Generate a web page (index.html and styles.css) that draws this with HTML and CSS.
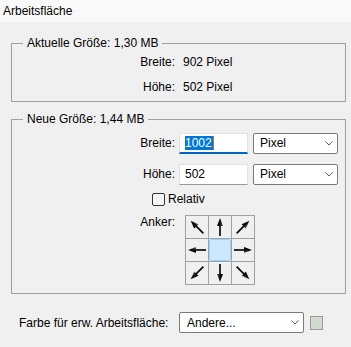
FILE: index.html
```html
<!DOCTYPE html>
<html lang="de">
<head>
<meta charset="utf-8">
<title>Arbeitsfläche</title>
<link rel="stylesheet" href="styles.css">
</head>
<body>
<svg class="defs" width="0" height="0" aria-hidden="true">
  <defs>
    <linearGradient id="headGrad" x1="0" y1="0" x2="1" y2="0">
      <stop offset="0" stop-color="#000"/>
      <stop offset="0.55" stop-color="#111"/>
      <stop offset="1" stop-color="#666"/>
    </linearGradient>
    <symbol id="arrow" viewBox="0 0 22 22">
      <rect x="10.2" y="8" width="1.6" height="12" fill="#000"/>
      <polygon points="11,2 8,10 14,10" fill="url(#headGrad)"/>
    </symbol>
  </defs>
</svg>
<div class="window">
  <div class="titlebar">Arbeitsfläche</div>
  <div class="content">
    <fieldset class="group group-current">
      <legend>Aktuelle Größe: 1,30 MB</legend>
      <div class="info-grid">
        <span class="label">Breite:</span><span class="value">902 Pixel</span>
        <span class="label">Höhe:</span><span class="value">502 Pixel</span>
      </div>
    </fieldset>

    <fieldset class="group group-new">
      <legend>Neue Größe: 1,44 MB</legend>
      <div class="field-row">
        <span class="label">Breite:</span>
        <div class="textbox active"><span class="sel">1002</span><span class="caret"></span></div>
        <div class="select unit"><span>Pixel</span><svg class="chev" viewBox="0 0 8 5"><polyline points="0.5,0.5 4,4 7.5,0.5" fill="none" stroke="#5a5a5a" stroke-width="1"/></svg></div>
      </div>
      <div class="field-row">
        <span class="label">Höhe:</span>
        <div class="textbox"><span>502</span></div>
        <div class="select unit"><span>Pixel</span><svg class="chev" viewBox="0 0 8 5"><polyline points="0.5,0.5 4,4 7.5,0.5" fill="none" stroke="#5a5a5a" stroke-width="1"/></svg></div>
      </div>
      <div class="check-row">
        <span class="checkbox"></span><span>Relativ</span>
      </div>
      <div class="anchor-row">
        <span class="label">Anker:</span>
        <div class="anchor-grid">
          <div class="cell"><svg class="arr r-nw"><use href="#arrow"/></svg></div>
          <div class="cell"><svg class="arr r-n"><use href="#arrow"/></svg></div>
          <div class="cell"><svg class="arr r-ne"><use href="#arrow"/></svg></div>
          <div class="cell"><svg class="arr r-w"><use href="#arrow"/></svg></div>
          <div class="cell"><div class="pin"></div></div>
          <div class="cell"><svg class="arr r-e"><use href="#arrow"/></svg></div>
          <div class="cell"><svg class="arr r-sw"><use href="#arrow"/></svg></div>
          <div class="cell"><svg class="arr r-s"><use href="#arrow"/></svg></div>
          <div class="cell"><svg class="arr r-se"><use href="#arrow"/></svg></div>
        </div>
      </div>
    </fieldset>

    <div class="bottom-row">
      <span class="bottom-label">Farbe für erw. Arbeitsfläche:</span>
      <div class="select wide"><span>Andere...</span><svg class="chev" viewBox="0 0 8 5"><polyline points="0.5,0.5 4,4 7.5,0.5" fill="none" stroke="#5a5a5a" stroke-width="1"/></svg></div>
      <span class="swatch"></span>
    </div>
  </div>
</div>
</body>
</html>
```
FILE: styles.css
```css
* { box-sizing: border-box; }
html, body { margin: 0; padding: 0; }
body {
  width: 351px;
  height: 347px;
  overflow: hidden;
  background: #f0f0f0;
  font-family: "Liberation Sans", Arial, sans-serif;
  font-size: 12px;
  color: #000;
}
.defs { position: absolute; width: 0; height: 0; }
.titlebar {
  height: 22px;
  line-height: 22px;
  padding-left: 3px;
  background: #f9f9f9;
}
.content { padding: 0 5px 0 11px; }
.group {
  margin: 13px 0 0;
  padding: 3px 0 6px;
  border: 1px solid #a0a0a0;
  min-width: 0;
}
.group legend {
  margin-left: 11px;
  padding: 0 4px;
  line-height: 16px;
}
.group-new { margin-top: 9px; padding: 5px 0 8px; }
.info-grid {
  display: grid;
  grid-template-columns: 163px auto;
  column-gap: 8px;
  row-gap: 9px;
  line-height: 16px;
}
.label { text-align: right; }
.field-row { display: flex; align-items: center; height: 22px; }
.field-row + .field-row { margin-top: 9px; }
.field-row .label { width: 163px; margin-right: 4px; }
.textbox {
  width: 69px;
  height: 21px;
  background: #fff;
  border: 1px solid #e2e2e2;
  border-bottom-color: #9a9a9a;
  padding-left: 5px;
  display: flex;
  align-items: center;
  margin-right: 5px;
}
.textbox.active { border-bottom: 2px solid #0067c0; padding-top: 1px; }
.sel { background: #0078d7; color: #fff; line-height: 14px; padding: 0 1px 0 0; }
.caret { width: 1px; height: 14px; background: #c86a2a; }
.select {
  height: 21px;
  background: #fff;
  border: 1px solid #7a7a7a;
  border-radius: 2px;
  display: flex;
  align-items: center;
  justify-content: space-between;
  padding: 0 4px 0 6px;
}
.select.unit { width: 85px; }
.chev { width: 8px; height: 5px; }
.check-row {
  display: flex;
  align-items: center;
  height: 16px;
  margin: 6px 0 0 140px;
}
.checkbox {
  width: 13px;
  height: 13px;
  border: 1px solid #333;
  border-radius: 2px;
  background: #f7f7f7;
  margin-right: 3px;
}
.anchor-row { display: flex; margin-top: 8px; }
.anchor-row .label { width: 163px; margin-right: 10px; line-height: 14px; }
.anchor-grid {
  display: grid;
  grid-template-columns: repeat(3, 22px);
  grid-template-rows: repeat(3, 22px);
  gap: 1px;
  width: 70px;
  height: 70px;
  background: #a0a0a0;
  border: 1px solid #a0a0a0;
}
.cell {
  background: #f0f0f0;
  display: flex;
  align-items: center;
  justify-content: center;
}
.arr { width: 22px; height: 22px; }
.r-n { transform: rotate(0deg); }
.r-ne { transform: rotate(45deg); }
.r-e { transform: rotate(90deg); }
.r-se { transform: rotate(135deg); }
.r-s { transform: rotate(180deg); }
.r-sw { transform: rotate(225deg); }
.r-w { transform: rotate(270deg); }
.r-nw { transform: rotate(315deg); }
.pin {
  width: 22px;
  height: 22px;
  background: #cce8ff;
  border: 1px solid #99d1ff;
  border-radius: 3px;
}
.bottom-row {
  display: flex;
  align-items: center;
  height: 21px;
  margin-top: 18px;
}
.bottom-label { width: 168px; padding-left: 8px; }
.select.wide { width: 125px; padding-left: 7px; margin-right: 6px; }
.swatch {
  width: 13px;
  height: 14px;
  background: #d3dbd1;
  border: 1px solid #9a9a9a;
}
```
